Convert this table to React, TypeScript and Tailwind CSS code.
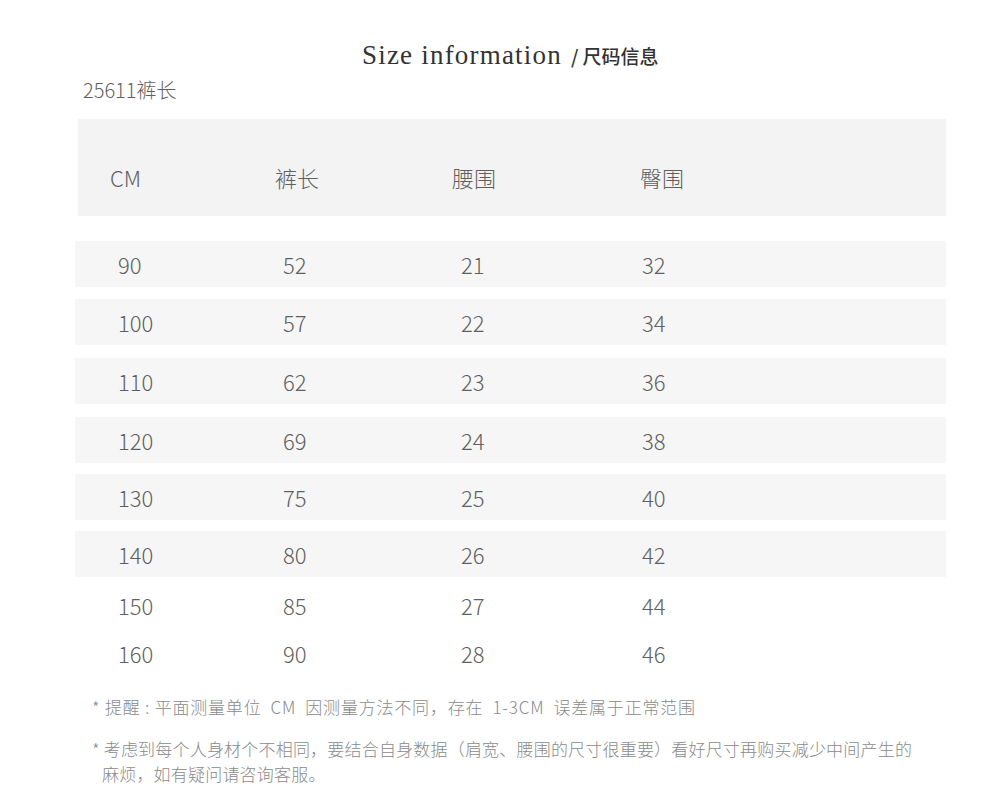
const rows = [
  { cm: "90", len: "52", waist: "21", hip: "32", band: true, mt: "mt-[25px]" },
  { cm: "100", len: "57", waist: "22", hip: "34", band: true, mt: "mt-[12px]" },
  { cm: "110", len: "62", waist: "23", hip: "36", band: true, mt: "mt-[13px]" },
  { cm: "120", len: "69", waist: "24", hip: "38", band: true, mt: "mt-[13px]" },
  { cm: "130", len: "75", waist: "25", hip: "40", band: true, mt: "mt-[11px]" },
  { cm: "140", len: "80", waist: "26", hip: "42", band: true, mt: "mt-[11px]" },
  { cm: "150", len: "85", waist: "27", hip: "44", band: false, mt: "mt-[5px]" },
  { cm: "160", len: "90", waist: "28", hip: "46", band: false, mt: "mt-[2px]" },
];

const sans = "font-['Noto_Sans_CJK_SC','Noto_Sans',sans-serif]";

export default function App() {
  return (
    <div className={`w-[1008px] h-[804px] bg-white text-[#5f5f5f] ${sans}`}>
      <div className="pt-[38px] pl-[362px] flex items-baseline">
        <span className="font-['Liberation_Serif',serif] text-[27px] tracking-[1.2px] text-[#333] leading-[34px]">
          Size information
        </span>
        <span className="ml-[9px] text-[19px] font-medium text-[#333]">/ 尺码信息</span>
      </div>
      <p className="pl-[83px] mt-[4px] text-[20px] leading-[28px] font-light">25611裤长</p>

      <div className="ml-[78px] mt-[15px] w-[868px] h-[97px] bg-[#f3f3f3] grid grid-cols-[165px_177px_188px_1fr] items-center pl-[32px] pt-[20px] text-[22px] font-light">
        <span>CM</span>
        <span>裤长</span>
        <span>腰围</span>
        <span>臀围</span>
      </div>

      {rows.map((r) => (
        <div
          key={r.cm}
          className={`ml-[75px] w-[871px] h-[46px] grid grid-cols-[165px_178px_181px_1fr] items-center pl-[43px] text-[22px] font-light ${r.mt} ${
            r.band ? "bg-[#f6f6f6]" : ""
          }`}
        >
          <span>{r.cm}</span>
          <span>{r.len}</span>
          <span>{r.waist}</span>
          <span>{r.hip}</span>
        </div>
      ))}

      <div className="pl-[92px] mt-[18px] text-[17px] tracking-[0.2px] text-[#8a8a8a] font-light">
        <p className="leading-[26px] whitespace-pre tracking-[0.8px]">* 提醒 : 平面测量单位  CM  因测量方法不同，存在  1-3CM  误差属于正常范围</p>
        <p className="mt-[16px] leading-[25px]">
          * 考虑到每个人身材个不相同，要结合自身数据（肩宽、腰围的尺寸很重要）看好尺寸再购买减少中间产生的
        </p>
        <p className="pl-[10px] leading-[25px]">麻烦，如有疑问请咨询客服。</p>
      </div>
    </div>
  );
}
